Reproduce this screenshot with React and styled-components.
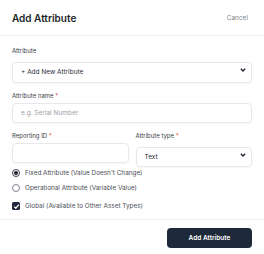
import React from 'react';
import styled, { createGlobalStyle } from 'styled-components';

const GlobalStyle = createGlobalStyle`
  html, body {
    margin: 0;
    padding: 0;
    background: #ffffff;
  }
  body {
    font-family: Inter, "Open Sans", sans-serif;
    color: #1f2430;
  }
  * {
    box-sizing: border-box;
  }
`;

function Chevron() {
  return (
    <svg width="6" height="4" viewBox="0 0 6 4">
      <path d="M0.8 0.8 L3 3 L5.2 0.8" fill="none" stroke="#1f2430" strokeWidth="1.3" />
    </svg>
  );
}

function App() {
  return (
    <Modal>
      <GlobalStyle />
      <Header>
        <Title>Add Attribute</Title>
        <CancelButton>Cancel</CancelButton>
      </Header>

      <Body>
        <Field>
          <Label>Attribute</Label>
          <SelectWrap>
            <Select defaultValue="new">
              <option value="new">+ Add New Attribute</option>
            </Select>
            <ChevronBox>
              <Chevron />
            </ChevronBox>
          </SelectWrap>
        </Field>

        <Field>
          <Label>
            Attribute name <Req>*</Req>
          </Label>
          <Input placeholder="e.g. Serial Number" />
        </Field>

        <Row>
          <Field>
            <Label>
              Reporting ID <Req>*</Req>
            </Label>
            <Input />
          </Field>
          <Field>
            <Label>
              Attribute type <Req>*</Req>
            </Label>
            <SelectWrap>
              <Select defaultValue="text" $short>
                <option value="text">Text</option>
              </Select>
              <ChevronBox>
                <Chevron />
              </ChevronBox>
            </SelectWrap>
          </Field>
        </Row>

        <Options>
          <OptionRow>
            <Radio $checked />
            <OptionText>Fixed Attribute (Value Doesn't Change)</OptionText>
          </OptionRow>
          <OptionRow>
            <Radio />
            <OptionText>Operational Attribute (Variable Value)</OptionText>
          </OptionRow>
          <OptionRow $spaced>
            <Checkbox>
              <svg width="7" height="7" viewBox="0 0 7 7">
                <path d="M1.2 3.6 L2.8 5.2 L5.9 1.6" fill="none" stroke="#ffffff" strokeWidth="1.3" />
              </svg>
            </Checkbox>
            <OptionText>Global (Available to Other Asset Types)</OptionText>
          </OptionRow>
        </Options>
      </Body>

      <Footer>
        <PrimaryButton>Add Attribute</PrimaryButton>
      </Footer>
    </Modal>
  );
}

export default App;

const Modal = styled.div`
  width: 264px;
  height: 254px;
  background: #ffffff;
  display: flex;
  flex-direction: column;
`;

const Header = styled.div`
  height: 36px;
  flex: none;
  padding: 0 16px 0 12px;
  display: flex;
  align-items: center;
  justify-content: space-between;
  border-bottom: 1px solid #eef0f3;
`;

const Title = styled.h2`
  margin: 0;
  font-size: 10px;
  font-weight: 600;
  color: #1c1f26;
`;

const CancelButton = styled.button`
  border: none;
  background: none;
  padding: 0;
  font-family: inherit;
  font-size: 6.5px;
  color: #7b8089;
`;

const Body = styled.div`
  padding: 11px 12px 5px;
  display: flex;
  flex-direction: column;
  gap: 9px;
`;

const Field = styled.div`
  display: flex;
  flex-direction: column;
  flex: 1;
  min-width: 0;
`;

const Label = styled.label`
  font-size: 6px;
  line-height: 8px;
  color: #3a3f48;
  margin-bottom: 3px;
`;

const Req = styled.span`
  color: #e0453a;
`;

const SelectWrap = styled.div`
  position: relative;
`;

const Select = styled.select`
  width: 100%;
  height: ${(p) => (p.$short ? '20px' : '21px')};
  appearance: none;
  border: 1px solid #e6e8ec;
  border-radius: 4px;
  background: #ffffff;
  padding: 0 0 0 8px;
  font-family: inherit;
  font-size: 6.5px;
  color: #2a2e36;
  box-shadow: 0 1px 2px rgba(20, 30, 50, 0.04);
  outline: none;
`;

const ChevronBox = styled.span`
  position: absolute;
  right: 6px;
  top: 50%;
  transform: translateY(-50%);
  display: flex;
  pointer-events: none;
`;

const Input = styled.input`
  width: 100%;
  height: 20px;
  border: 1px solid #e6e8ec;
  border-radius: 4px;
  padding: 0 0 0 8px;
  font-family: inherit;
  font-size: 6.5px;
  color: #2a2e36;
  box-shadow: 0 1px 2px rgba(20, 30, 50, 0.04);
  outline: none;

  &::placeholder {
    color: #9a9ea6;
  }
`;

const Row = styled.div`
  display: flex;
  gap: 7px;
`;

const Options = styled.div`
  display: flex;
  flex-direction: column;
  margin-top: -10px;
`;

const OptionRow = styled.div`
  height: 15px;
  display: flex;
  align-items: center;
  gap: 5px;
  margin-top: ${(p) => (p.$spaced ? '3px' : '0')};
`;

const Radio = styled.span`
  width: 8px;
  height: 8px;
  border-radius: 50%;
  border: 1px solid ${(p) => (p.$checked ? '#3b3f46' : '#7d828b')};
  display: flex;
  align-items: center;
  justify-content: center;

  &::after {
    content: '';
    width: 4px;
    height: 4px;
    border-radius: 50%;
    background: #1f2430;
    display: ${(p) => (p.$checked ? 'block' : 'none')};
  }
`;

const Checkbox = styled.span`
  width: 8px;
  height: 8px;
  border-radius: 1.5px;
  background: #1e2a3a;
  display: flex;
  align-items: center;
  justify-content: center;
`;

const OptionText = styled.span`
  font-size: 6.4px;
  color: #4a4f58;
`;

const Footer = styled.div`
  border-top: 1px solid #eef0f3;
  padding: 8px 12px 0;
  display: flex;
  justify-content: flex-end;
`;

const PrimaryButton = styled.button`
  width: 85px;
  height: 20px;
  border: none;
  border-radius: 4px;
  background: #1e2a3a;
  color: #ffffff;
  font-family: inherit;
  font-size: 6.5px;
  font-weight: 600;
`;
